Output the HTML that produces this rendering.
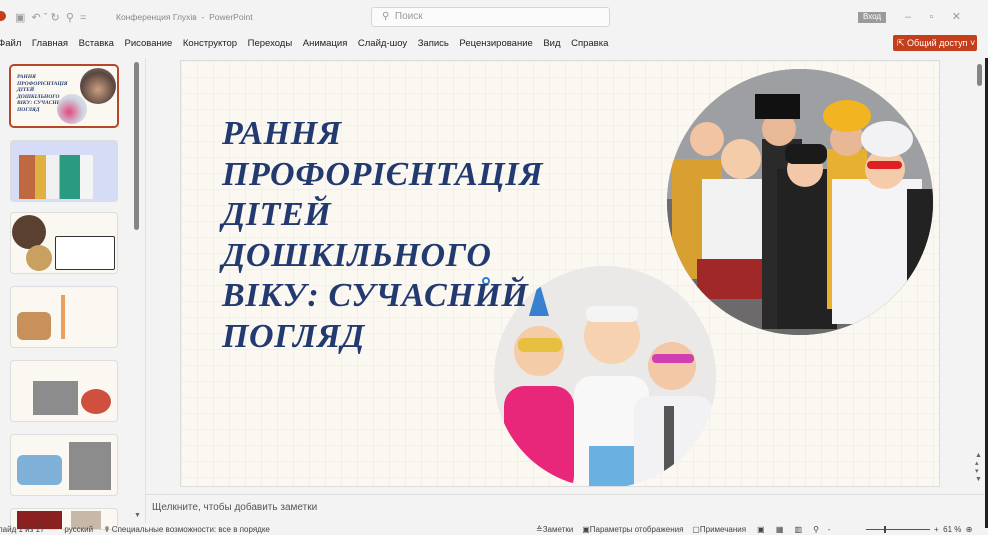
<!DOCTYPE html>
<html><head><meta charset="utf-8"><style>
*{margin:0;padding:0;box-sizing:border-box}
body{width:988px;height:535px;overflow:hidden;background:#f3f3f3;font-family:"Liberation Sans",sans-serif;position:relative;color:#333}
.abs{position:absolute}
.t{font-size:9px;color:#666;white-space:nowrap}
.menu{font-size:9.5px;color:#222;white-space:nowrap}
.thumb{position:absolute;left:11px;width:106px;height:60px;background:#fbf8f1;border-radius:3px;box-shadow:0 0 0 1px #ddd;overflow:hidden}
.title{position:absolute;left:222px;top:114px;font-family:"Liberation Serif",serif;font-style:italic;font-weight:bold;font-size:34px;line-height:40.6px;color:#233a70;letter-spacing:0.6px;white-space:nowrap}
</style></head><body>
<div class="abs" style="left:-4px;top:11px;width:10px;height:10px;border-radius:50%;background:#c43e1c"></div>
<div class="abs t" style="left:15px;top:11px;color:#999;font-size:11px">▣ &nbsp;↶ ˇ ↻ &nbsp;⚲ &nbsp;=</div>
<div class="abs t" style="left:116px;top:12px;color:#888;font-size:8.5px">Конференция Глухів &nbsp;-&nbsp; PowerPoint</div>
<div class="abs" style="left:371px;top:7px;width:239px;height:20px;background:#fbfbfb;border:1px solid #d6d6d6;border-radius:3px"></div>
<div class="abs t" style="left:382px;top:11px;color:#999;font-size:10px">⚲ &nbsp;Поиск</div>
<div class="abs" style="left:858px;top:12px;width:28px;height:11px;background:#9b9b9b"></div>
<div class="abs t" style="left:863px;top:12px;color:#fff;font-size:8px">Вход</div>
<div class="abs t" style="left:905px;top:10px;color:#999;font-size:11px">–&nbsp;&nbsp;&nbsp;&nbsp;&nbsp;&nbsp;▫&nbsp;&nbsp;&nbsp;&nbsp;&nbsp;&nbsp;✕</div>
<div class="abs menu" style="left:-2px;top:38px">Файл&nbsp;&nbsp;&nbsp; Главная&nbsp;&nbsp;&nbsp; Вставка&nbsp;&nbsp;&nbsp; Рисование&nbsp;&nbsp;&nbsp; Конструктор&nbsp;&nbsp;&nbsp; Переходы&nbsp;&nbsp;&nbsp; Анимация&nbsp;&nbsp;&nbsp; Слайд-шоу&nbsp;&nbsp;&nbsp; Запись&nbsp;&nbsp;&nbsp; Рецензирование&nbsp;&nbsp;&nbsp; Вид&nbsp;&nbsp;&nbsp; Справка</div>
<div class="abs" style="left:893px;top:35px;width:84px;height:16px;background:#c43e1c;border-radius:2px"></div>
<div class="abs t" style="left:897px;top:38px;color:#fff;font-size:9px">⇱ Общий доступ ˅</div>
<div class="abs" style="left:134px;top:62px;width:5px;height:168px;background:#858585;border-radius:3px"></div>
<div class="abs" style="left:145px;top:58px;width:1px;height:465px;background:#e0e0e0"></div>
<div class="thumb" style="top:66px;box-shadow:0 0 0 2px #b7472a">
 <div class="abs" style="left:6px;top:8px;font:italic bold 5.5px 'Liberation Serif';color:#233a70;line-height:6.5px">РАННЯ<br>ПРОФОРІЄНТАЦІЯ<br>ДІТЕЙ<br>ДОШКІЛЬНОГО<br>ВІКУ: СУЧАСНИЙ<br>ПОГЛЯД</div>
 <div class="abs" style="left:69px;top:2px;width:36px;height:36px;border-radius:50%;background:radial-gradient(circle at 50% 60%,#c9a080,#5a4540 60%,#888)"></div>
 <div class="abs" style="left:46px;top:28px;width:30px;height:30px;border-radius:50%;background:radial-gradient(circle at 40% 60%,#e04a80,#cfd5e0 55%,#e8e8e8)"></div>
</div>
<div class="thumb" style="top:141px;background:#d6dcf6">
 <div class="abs" style="left:8px;top:14px;width:90px;height:44px;background:linear-gradient(90deg,#c06840 0 18%,#e0b040 18% 30%,#f0f0f0 30% 45%,#2a9a80 45% 68%,#f4f4f4 68% 82%,#d6dcf6 82%)"></div>
</div>
<div class="thumb" style="top:213px">
 <div class="abs" style="left:1px;top:2px;width:34px;height:34px;border-radius:50%;background:#5a4030"></div>
 <div class="abs" style="left:15px;top:32px;width:26px;height:26px;border-radius:50%;background:#c8a060"></div>
 <div class="abs" style="left:44px;top:23px;width:60px;height:34px;border:1px solid #333;background:#fff;border-radius:2px"></div>
</div>
<div class="thumb" style="top:287px">
 <div class="abs" style="left:6px;top:25px;width:34px;height:28px;background:#c8905a;border-radius:6px"></div>
 <div class="abs" style="left:50px;top:8px;width:4px;height:44px;background:#e8a060"></div>
</div>
<div class="thumb" style="top:361px">
 <div class="abs" style="left:22px;top:20px;width:45px;height:34px;background:#8c8c8c"></div>
 <div class="abs" style="left:70px;top:28px;width:30px;height:25px;background:#d05040;border-radius:50%"></div>
</div>
<div class="thumb" style="top:435px">
 <div class="abs" style="left:6px;top:20px;width:45px;height:30px;background:#7eb0d8;border-radius:6px"></div>
 <div class="abs" style="left:58px;top:7px;width:42px;height:48px;background:#8c8c8c"></div>
</div>
<div class="thumb" style="top:509px;height:20px">
 <div class="abs" style="left:6px;top:2px;width:45px;height:18px;background:#8a2020"></div>
 <div class="abs" style="left:60px;top:2px;width:30px;height:18px;background:#c8b8a8"></div>
</div>
<div class="abs t" style="left:134px;top:512px;font-size:7px">▼</div>
<div class="abs" style="left:180px;top:60px;width:760px;height:427px;background-color:#fbf8f1;background-image:linear-gradient(#f3f0e8 1px,transparent 1px),linear-gradient(90deg,#f3f0e8 1px,transparent 1px);background-size:16px 16px;border:1px solid #ddd;overflow:hidden">
 <div class="abs" style="left:486px;top:8px;width:266px;height:266px;border-radius:50%;overflow:hidden;background:#a9a9a9">
  <svg width="266" height="266" viewBox="0 0 266 266">
   <rect width="266" height="266" fill="#9d9fa2"/>
   <rect x="0" y="130" width="266" height="136" fill="#6c6a6a"/>
   <rect x="5" y="90" width="50" height="120" fill="#d8a030"/>
   <rect x="35" y="110" width="70" height="100" fill="#f2f2f2"/>
   <rect x="30" y="190" width="80" height="40" fill="#a02828"/>
   <rect x="95" y="70" width="40" height="190" fill="#2a2a2a"/>
   <rect x="110" y="100" width="60" height="160" fill="#222"/>
   <rect x="160" y="80" width="40" height="160" fill="#e7b030"/>
   <rect x="165" y="110" width="90" height="145" fill="#f4f4f6"/>
   <rect x="240" y="120" width="26" height="140" fill="#222"/>
   <circle cx="40" cy="70" r="17" fill="#f2c4a4"/>
   <circle cx="74" cy="90" r="20" fill="#f4ccaa"/>
   <circle cx="112" cy="60" r="17" fill="#e9b896"/>
   <rect x="88" y="25" width="45" height="25" fill="#111"/>
   <circle cx="138" cy="100" r="18" fill="#f2c8a8"/>
   <rect x="118" y="75" width="42" height="20" rx="8" fill="#1a1a1a"/>
   <circle cx="180" cy="70" r="17" fill="#e8b896"/>
   <ellipse cx="180" cy="47" rx="24" ry="16" fill="#f2b420"/>
   <circle cx="218" cy="100" r="20" fill="#f4ccaa"/>
   <ellipse cx="220" cy="70" rx="26" ry="18" fill="#f2f2f4"/>
   <rect x="200" y="92" width="35" height="8" rx="4" fill="#e02020"/>
  </svg>
 </div>
 <div class="abs" style="left:313px;top:205px;width:222px;height:222px;border-radius:50%;overflow:hidden;background:#ececec">
  <svg width="222" height="222" viewBox="0 0 222 222">
   <rect width="222" height="222" fill="#ebe9e7"/>
   <rect x="10" y="120" width="70" height="110" rx="20" fill="#e8267a"/>
   <circle cx="45" cy="85" r="25" fill="#f4cca8"/>
   <rect x="24" y="72" width="44" height="14" rx="6" fill="#e8c040"/>
   <polygon points="35,50 55,50 45,15" fill="#3a80d0"/>
   <rect x="80" y="110" width="75" height="120" rx="18" fill="#f8f8f8"/>
   <rect x="95" y="180" width="45" height="42" fill="#6ab0e0"/>
   <circle cx="118" cy="70" r="28" fill="#f6d2b0"/>
   <rect x="92" y="40" width="52" height="16" rx="7" fill="#f4f4f4"/>
   <rect x="140" y="130" width="78" height="100" rx="14" fill="#f2f2f4"/>
   <rect x="170" y="140" width="10" height="70" fill="#555"/>
   <circle cx="178" cy="100" r="24" fill="#f2c8a6"/>
   <rect x="158" y="88" width="42" height="9" rx="4" fill="#d040b0"/>
  </svg>
 </div>
 <div class="abs" style="left:301px;top:216px;width:8px;height:8px;border:2px solid #2a7fd0;border-radius:50%;background:#fff"></div>
</div>
<div class="title">РАННЯ<br>ПРОФОРІЄНТАЦІЯ<br>ДІТЕЙ<br>ДОШКІЛЬНОГО<br>ВІКУ: СУЧАСНИЙ<br>ПОГЛЯД</div>
<div class="abs" style="left:977px;top:64px;width:5px;height:22px;background:#858585;border-radius:3px"></div>
<div class="abs" style="left:985px;top:58px;width:3px;height:470px;background:#1f1f1f"></div>
<div class="abs t" style="left:975px;top:452px;font-size:7px;line-height:8px">▲<br>▴<br>▾<br>▼</div>
<div class="abs" style="left:146px;top:494px;width:838px;height:1px;background:#ddd"></div>
<div class="abs t" style="left:152px;top:502px;font-size:10px;color:#555">Щелкните, чтобы добавить заметки</div>
<div class="abs t" style="left:-2px;top:525px;font-size:8px;color:#444">лайд 1 из 17 &nbsp;&nbsp;&nbsp;&nbsp;&nbsp;&nbsp;&nbsp; русский &nbsp;&nbsp;&nbsp; ☤ Специальные возможности: все в порядке</div>
<div class="abs t" style="left:536px;top:525px;font-size:8px;color:#444">≙Заметки &nbsp;&nbsp;&nbsp;▣Параметры отображения &nbsp;&nbsp;&nbsp;▢Примечания &nbsp;&nbsp;&nbsp;&nbsp;▣ &nbsp;&nbsp;&nbsp;&nbsp;▦ &nbsp;&nbsp;&nbsp;&nbsp;▥ &nbsp;&nbsp;&nbsp;&nbsp;⚲ &nbsp;&nbsp;&nbsp;-</div>
<div class="abs" style="left:866px;top:529px;width:64px;height:1px;background:#555"></div>
<div class="abs" style="left:884px;top:526px;width:2px;height:7px;background:#444"></div>
<div class="abs t" style="left:934px;top:525px;font-size:8px;color:#444">+ &nbsp;61 % &nbsp;⊕</div>
</body></html>
